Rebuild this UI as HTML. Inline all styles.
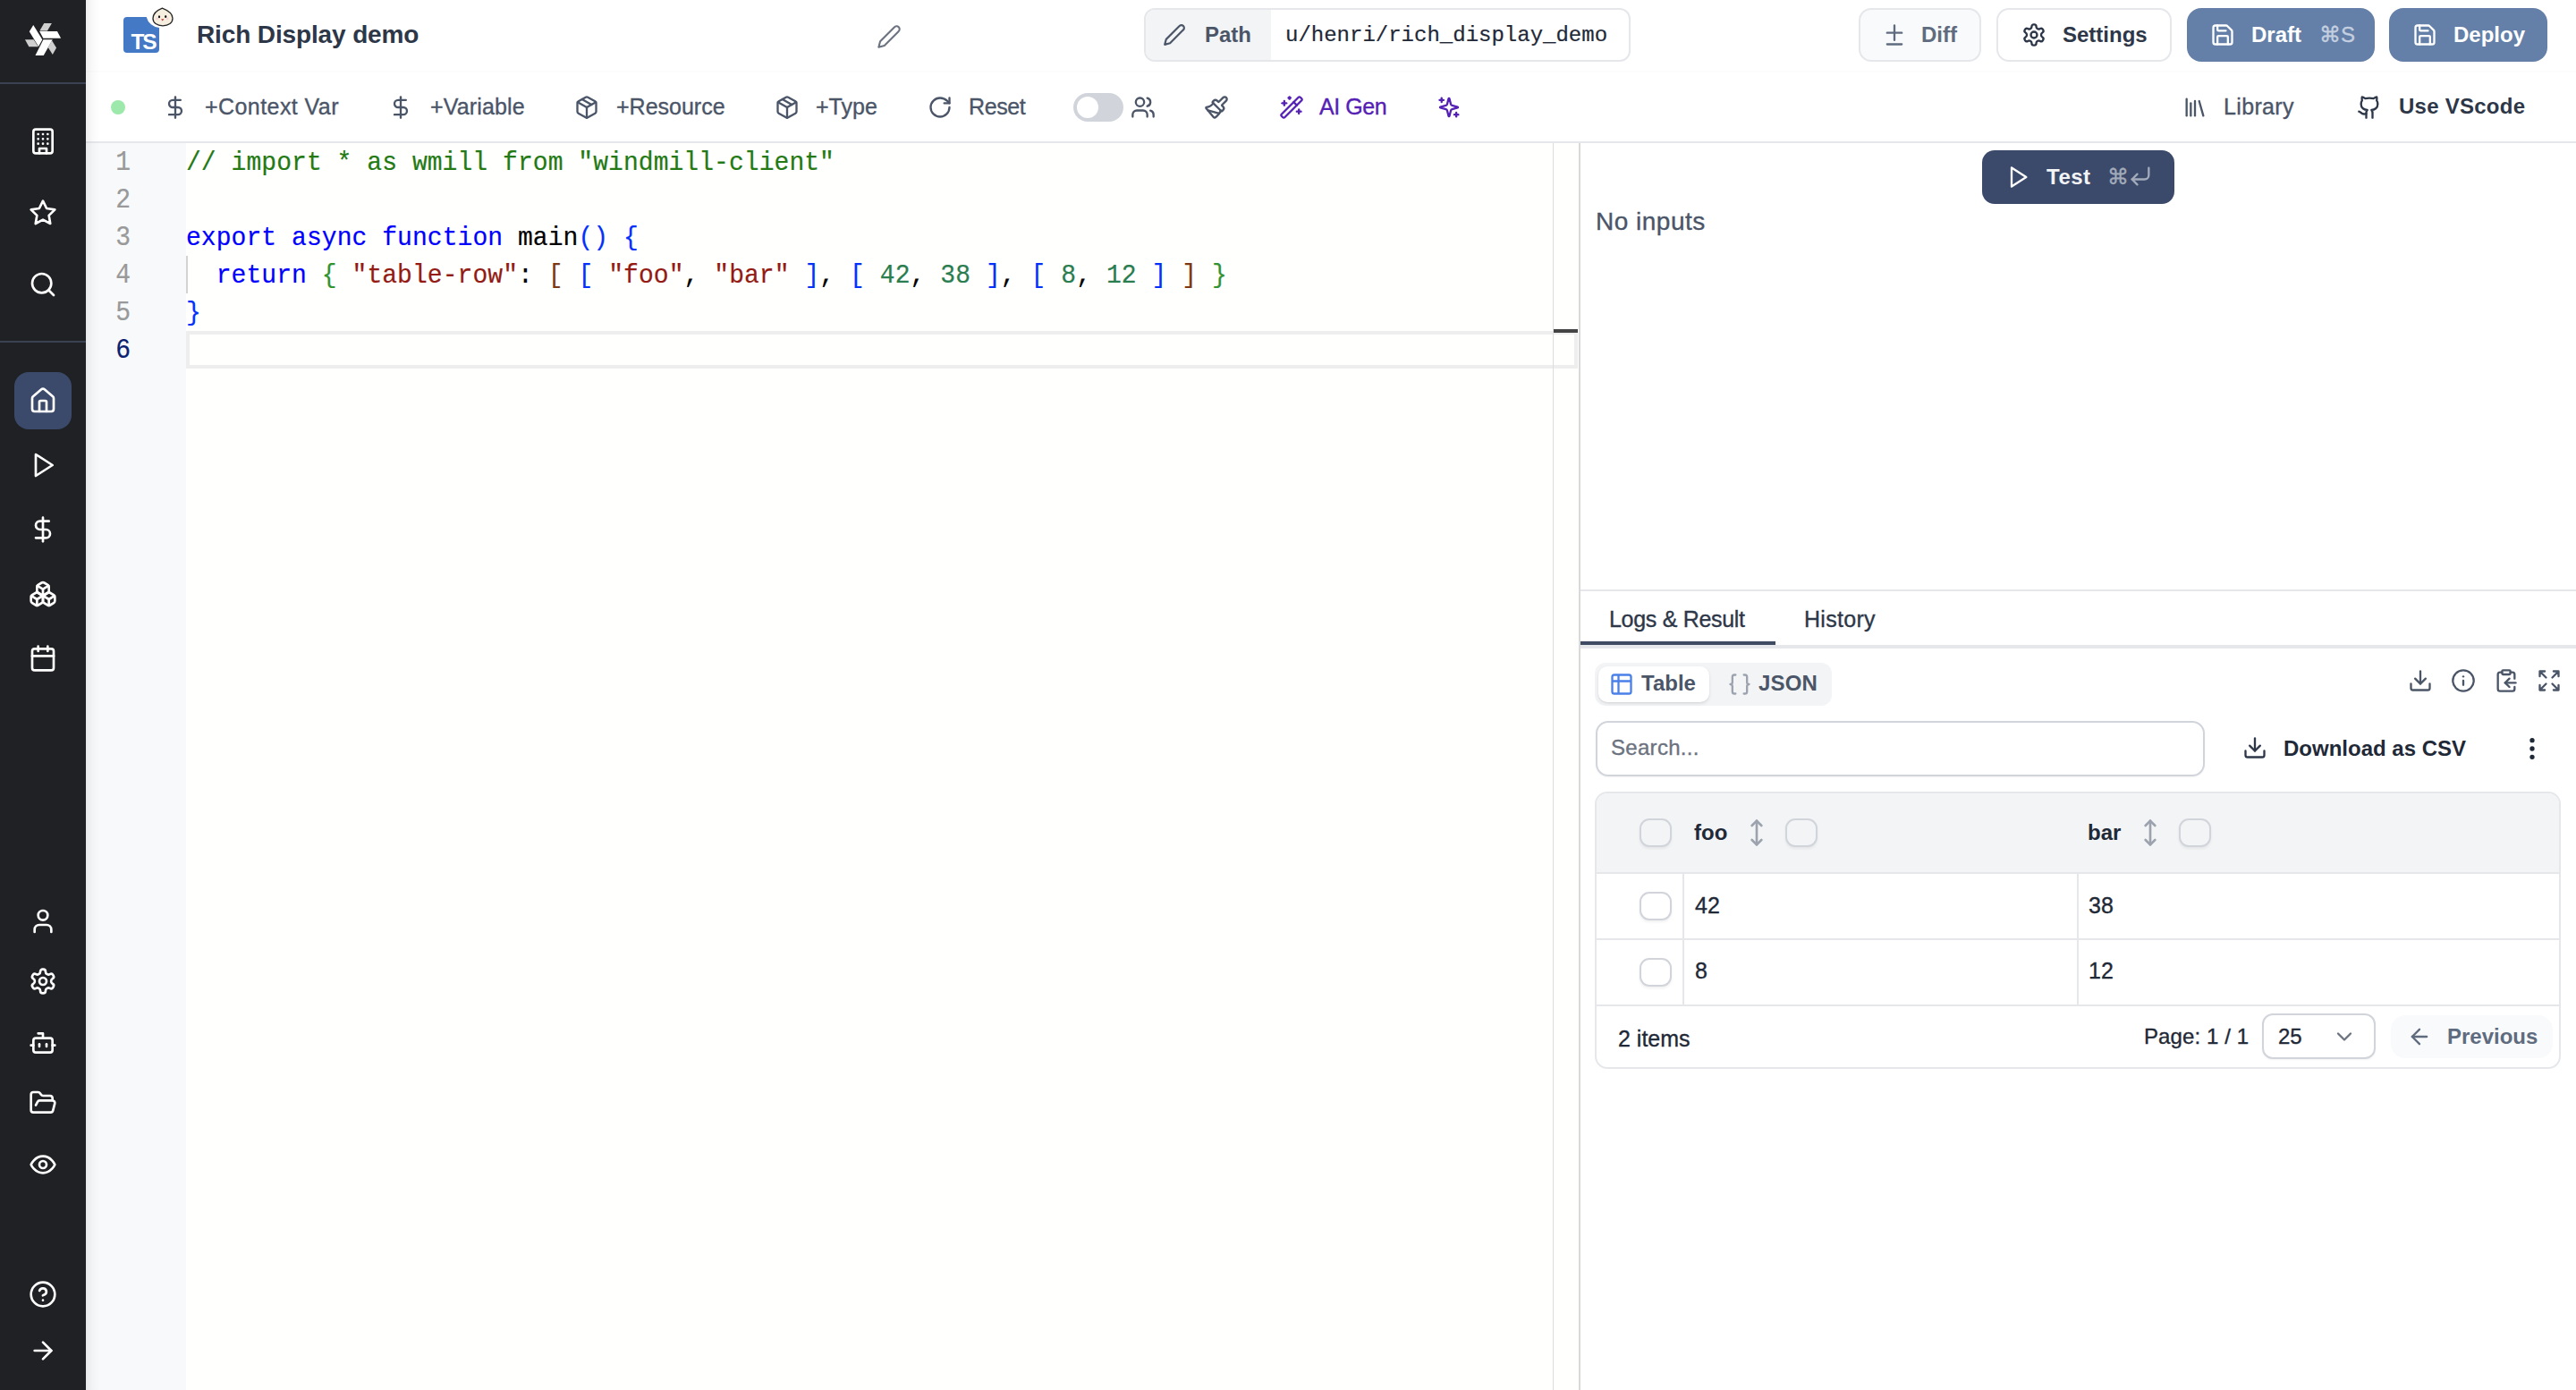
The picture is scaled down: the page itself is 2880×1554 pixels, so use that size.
<!DOCTYPE html>
<html><head><meta charset="utf-8">
<style>
*{box-sizing:border-box;margin:0;padding:0}
html,body{width:2880px;height:1554px;overflow:hidden;background:#fff;font-family:"Liberation Sans",sans-serif}
.a{position:absolute}
.t{position:absolute;white-space:nowrap;line-height:1;-webkit-text-stroke:0.35px currentColor}
.t[style*="font-weight:bold"]{-webkit-text-stroke:0}
.m{-webkit-text-stroke:0.2px currentColor}
.m span{-webkit-text-stroke:0.2px currentColor}
.m{font-family:"Liberation Mono",monospace}
svg.i{position:absolute;fill:none;stroke:currentColor;stroke-width:2;stroke-linecap:round;stroke-linejoin:round}
@media (max-width:2000px){html{zoom:0.5}}
#side{left:0;top:0;width:96px;height:1554px;background:#202125}
#side svg.i{color:#fff}
</style></head><body>

<!-- SIDEBAR -->
<div id="side" class="a">
  <svg class="a" style="left:16px;top:10px" width="64" height="64" viewBox="0 0 1390 1390">
    <g fill="#fff">
      <polygon points="462,390 680,742 588,910 365,548"/>
      <polygon points="612,545 1042,545 1132,712 702,712"/>
      <polygon points="705,745 928,745 712,1127 510,1127"/>
    </g>
    <g fill="#cfcfcf">
      <polygon points="722,350 910,350 802,532 615,532"/>
      <polygon points="260,745 470,745 582,915 355,915"/>
      <polygon points="912,768 1022,945 930,1105 820,935"/>
    </g>
  </svg>
  <div class="a" style="left:0;top:92px;width:96px;height:2px;background:#3a4150"></div>
  <div class="a" style="left:0;top:381px;width:96px;height:2px;background:#3a4150"></div>
  <div class="a" style="left:16px;top:416px;width:64px;height:64px;border-radius:16px;background:#3b4a6b"></div>
  <svg class="i" style="left:32px;top:142px" width="32" height="32" viewBox="0 0 24 24"><rect width="16" height="20" x="4" y="2" rx="2" ry="2"/><path d="M9 22v-4h6v4"/><path d="M8 6h.01M16 6h.01M12 6h.01M12 10h.01M12 14h.01M16 10h.01M16 14h.01M8 10h.01M8 14h.01"/></svg>
  <svg class="i" style="left:32px;top:221.5px" width="32" height="32" viewBox="0 0 24 24"><polygon points="12 2 15.09 8.26 22 9.27 17 14.14 18.18 21.02 12 17.77 5.82 21.02 7 14.14 2 9.27 8.91 8.26 12 2"/></svg>
  <svg class="i" style="left:32px;top:302px" width="32" height="32" viewBox="0 0 24 24"><circle cx="11" cy="11" r="8"/><path d="m21 21-4.3-4.3"/></svg>
  <svg class="i" style="left:32px;top:432px" width="32" height="32" viewBox="0 0 24 24"><path d="M15 21v-8a1 1 0 0 0-1-1h-4a1 1 0 0 0-1 1v8"/><path d="M3 10a2 2 0 0 1 .709-1.528l7-5.999a2 2 0 0 1 2.582 0l7 5.999A2 2 0 0 1 21 10v9a2 2 0 0 1-2 2H5a2 2 0 0 1-2-2z"/></svg>
  <svg class="i" style="left:32px;top:504px" width="32" height="32" viewBox="0 0 24 24"><polygon points="6 3 20 12 6 21 6 3"/></svg>
  <svg class="i" style="left:32px;top:575.5px" width="32" height="32" viewBox="0 0 24 24"><line x1="12" x2="12" y1="2" y2="22"/><path d="M17 5H9.5a3.5 3.5 0 0 0 0 7h5a3.5 3.5 0 0 1 0 7H6"/></svg>
  <svg class="i" style="left:32px;top:648px" width="32" height="32" viewBox="0 0 24 24"><path d="M2.97 12.92A2 2 0 0 0 2 14.63v3.24a2 2 0 0 0 .97 1.71l3 1.8a2 2 0 0 0 2.06 0L12 19v-5.5l-5-3-4.03 2.42Z"/><path d="m7 16.5-4.74-2.85"/><path d="m7 16.5 5-3"/><path d="M7 16.5v5.17"/><path d="M12 13.5V19l3.97 2.38a2 2 0 0 0 2.06 0l3-1.8a2 2 0 0 0 .97-1.71v-3.24a2 2 0 0 0-.97-1.71L17 10.5l-5 3Z"/><path d="m17 16.5-5-3"/><path d="m17 16.5 4.74-2.85"/><path d="M17 16.5v5.17"/><path d="M7.97 4.42A2 2 0 0 0 7 6.13v4.37l5 3 5-3V6.13a2 2 0 0 0-.97-1.71l-3-1.8a2 2 0 0 0-2.06 0l-3 1.8Z"/><path d="M12 8 7.26 5.15"/><path d="m12 8 4.74-2.85"/><path d="M12 13.5V8"/></svg>
  <svg class="i" style="left:32px;top:720px" width="32" height="32" viewBox="0 0 24 24"><path d="M8 2v4"/><path d="M16 2v4"/><rect width="18" height="18" x="3" y="4" rx="2"/><path d="M3 10h18"/></svg>
  <svg class="i" style="left:32px;top:1014px" width="32" height="32" viewBox="0 0 24 24"><path d="M19 21v-2a4 4 0 0 0-4-4H9a4 4 0 0 0-4 4v2"/><circle cx="12" cy="7" r="4"/></svg>
  <svg class="i" style="left:32px;top:1081px" width="32" height="32" viewBox="0 0 24 24"><path d="M12.22 2h-.44a2 2 0 0 0-2 2v.18a2 2 0 0 1-1 1.73l-.43.25a2 2 0 0 1-2 0l-.15-.08a2 2 0 0 0-2.73.73l-.22.38a2 2 0 0 0 .73 2.730l.15.1a2 2 0 0 1 1 1.72v.51a2 2 0 0 1-1 1.74l-.15.09a2 2 0 0 0-.73 2.73l.22.38a2 2 0 0 0 2.73.73l.15-.08a2 2 0 0 1 2 0l.43.25a2 2 0 0 1 1 1.73V20a2 2 0 0 0 2 2h.44a2 2 0 0 0 2-2v-.18a2 2 0 0 1 1-1.73l.43-.25a2 2 0 0 1 2 0l.15.08a2 2 0 0 0 2.73-.73l.22-.39a2 2 0 0 0-.73-2.73l-.15-.08a2 2 0 0 1-1-1.740v-.5a2 2 0 0 1 1-1.74l.15-.09a2 2 0 0 0 .73-2.73l-.22-.38a2 2 0 0 0-2.73-.73l-.15.08a2 2 0 0 1-2 0l-.43-.25a2 2 0 0 1-1-1.73V4a2 2 0 0 0-2-2z"/><circle cx="12" cy="12" r="3"/></svg>
  <svg class="i" style="left:32px;top:1150px" width="32" height="32" viewBox="0 0 24 24"><path d="M12 8V4H8"/><rect width="16" height="12" x="4" y="8" rx="2"/><path d="M2 14h2"/><path d="M20 14h2"/><path d="M15 13v2"/><path d="M9 13v2"/></svg>
  <svg class="i" style="left:32px;top:1217px" width="32" height="32" viewBox="0 0 24 24"><path d="m6 14 1.5-2.9A2 2 0 0 1 9.24 10H20a2 2 0 0 1 1.94 2.5l-1.54 6a2 2 0 0 1-1.950 1.5H4a2 2 0 0 1-2-2V5a2 2 0 0 1 2-2h3.9a2 2 0 0 1 1.69.9l.81 1.2a2 2 0 0 0 1.67.9H18a2 2 0 0 1 2 2v2"/></svg>
  <svg class="i" style="left:32px;top:1286px" width="32" height="32" viewBox="0 0 24 24"><path d="M2 12s3-7 10-7 10 7 10 7-3 7-10 7-10-7-10-7Z"/><circle cx="12" cy="12" r="3"/></svg>
  <svg class="i" style="left:32px;top:1431px" width="32" height="32" viewBox="0 0 24 24"><circle cx="12" cy="12" r="10"/><path d="M9.09 9a3 3 0 0 1 5.83 1c0 2-3 3-3 3"/><path d="M12 17h.01"/></svg>
  <svg class="i" style="left:32px;top:1494px" width="32" height="32" viewBox="0 0 24 24"><path d="M5 12h14"/><path d="m12 5 7 7-7 7"/></svg>
</div>

<!-- main shadow -->
<div class="a" style="left:96px;top:0;width:16px;height:1554px;background:linear-gradient(90deg,rgba(0,0,0,0.065),rgba(0,0,0,0.02) 50%,rgba(0,0,0,0));z-index:5;pointer-events:none"></div>

<!-- HEADER -->
<div class="a" style="left:96px;top:0;width:2784px;height:81px;background:#fff;border-bottom:2px solid #fcfcfc"></div>
<!-- TS icon -->
<svg class="a" style="left:136px;top:8px" width="60" height="54" viewBox="0 0 60 54">
  <path d="M6 11 H27.7 A16 16 0 0 0 42 23 V47 A4 4 0 0 1 38 51 H6 A4 4 0 0 1 2 47 V15 A4 4 0 0 1 6 11 Z" fill="#4479c5"/>
  <text x="10.5" y="47.3" font-family="Liberation Sans" font-weight="bold" font-size="24.5" fill="#fff" letter-spacing="-2.2">TS</text>
  <path d="M45.4 1.2 C41 3 35 6.5 35 12.5 C35 17.5 39.5 20.8 46 20.8 C52.5 20.8 57 17.5 57 12.5 C57 6.5 50 3 45.4 1.2Z" fill="#f6eedf" stroke="#262626" stroke-width="1.3"/>
  <ellipse cx="42" cy="10.7" rx="1.1" ry="1.5" fill="#111"/><ellipse cx="49.2" cy="10.4" rx="1.1" ry="1.5" fill="#111"/>
  <circle cx="39.6" cy="12.9" r="1.3" fill="#f7cfd8"/><circle cx="51.2" cy="12.8" r="1.3" fill="#f7cfd8"/>
  <path d="M44.1 13.3 L47.5 13.3 L45.7 15.6Z" fill="#c23b3b"/>
</svg>
<div class="t" style="left:220px;top:25px;font-size:28px;font-weight:bold;color:#2d3748;letter-spacing:-0.13px">Rich Display demo</div>
<svg class="i" style="left:980px;top:27px;color:#6b7280;stroke-width:1.8" width="28" height="28" viewBox="0 0 24 24"><path d="M17 3a2.85 2.83 0 1 1 4 4L7.5 20.5 2 22l1.5-5.5Z"/></svg>

<!-- Path box -->
<div class="a" style="left:1279px;top:9px;width:544px;height:60px;border:2px solid #e5e7eb;border-radius:12px;background:#fff;overflow:hidden">
  <div class="a" style="left:0;top:0;width:140px;height:56px;background:#f3f4f6"></div>
</div>
<svg class="i" style="left:1300px;top:26px;color:#4b5568" width="26" height="26" viewBox="0 0 24 24"><path d="M17 3a2.85 2.83 0 1 1 4 4L7.5 20.5 2 22l1.5-5.5Z"/></svg>
<div class="t" style="left:1347px;top:27px;font-size:24px;font-weight:bold;color:#4b5568">Path</div>
<div class="t m" style="left:1437px;top:28px;font-size:24px;color:#1f2937">u/henri/rich_display_demo</div>

<!-- Diff -->
<div class="a" style="left:2078px;top:9px;width:137px;height:60px;border:2px solid #e5e7eb;border-radius:14px;background:#f9fafb"></div>
<svg class="i" style="left:2104px;top:25px;color:#5f6b7e" width="28" height="28" viewBox="0 0 24 24"><path d="M12 3v14"/><path d="M5 10h14"/><path d="M5 21h14"/></svg>
<div class="t" style="left:2148px;top:27px;font-size:24px;font-weight:bold;color:#5f6b7e">Diff</div>
<!-- Settings -->
<div class="a" style="left:2232px;top:9px;width:196px;height:60px;border:2px solid #e5e7eb;border-radius:14px;background:#fff"></div>
<svg class="i" style="left:2260px;top:25px;color:#2d3748" width="28" height="28" viewBox="0 0 24 24"><path d="M12.22 2h-.44a2 2 0 0 0-2 2v.18a2 2 0 0 1-1 1.73l-.43.25a2 2 0 0 1-2 0l-.15-.08a2 2 0 0 0-2.73.73l-.22.38a2 2 0 0 0 .73 2.73l.15.1a2 2 0 0 1 1 1.72v.51a2 2 0 0 1-1 1.74l-.15.09a2 2 0 0 0-.73 2.73l.22.38a2 2 0 0 0 2.73.73l.15-.08a2 2 0 0 1 2 0l.43.25a2 2 0 0 1 1 1.73V20a2 2 0 0 0 2 2h.44a2 2 0 0 0 2-2v-.18a2 2 0 0 1 1-1.73l.43-.25a2 2 0 0 1 2 0l.15.08a2 2 0 0 0 2.73-.73l.22-.39a2 2 0 0 0-.73-2.73l-.15-.08a2 2 0 0 1-1-1.74v-.5a2 2 0 0 1 1-1.74l.15-.09a2 2 0 0 0 .73-2.73l-.22-.38a2 2 0 0 0-2.73-.73l-.15.08a2 2 0 0 1-2 0l-.43-.25a2 2 0 0 1-1-1.73V4a2 2 0 0 0-2-2z"/><circle cx="12" cy="12" r="3"/></svg>
<div class="t" style="left:2306px;top:27px;font-size:24px;font-weight:bold;color:#2d3748">Settings</div>
<!-- Draft -->
<div class="a" style="left:2445px;top:9px;width:210px;height:60px;border-radius:16px;background:#6480a8"></div>
<svg class="i" style="left:2471px;top:25px;color:#fff" width="28" height="28" viewBox="0 0 24 24"><path d="M15.2 3a2 2 0 0 1 1.4.6l3.8 3.8a2 2 0 0 1 .6 1.4V19a2 2 0 0 1-2 2H5a2 2 0 0 1-2-2V5a2 2 0 0 1 2-2z"/><path d="M17 21v-7a1 1 0 0 0-1-1H8a1 1 0 0 0-1 1v7"/><path d="M7 3v4a1 1 0 0 0 1 1h7"/></svg>
<div class="t" style="left:2517px;top:27px;font-size:24px;font-weight:bold;color:#fff">Draft</div>
<div class="t" style="left:2593px;top:27px;font-size:24px;color:#c4cfe0">⌘S</div>
<!-- Deploy -->
<div class="a" style="left:2671px;top:9px;width:177px;height:60px;border-radius:16px;background:#6480a8"></div>
<svg class="i" style="left:2697px;top:25px;color:#fff" width="28" height="28" viewBox="0 0 24 24"><path d="M15.2 3a2 2 0 0 1 1.4.6l3.8 3.8a2 2 0 0 1 .6 1.4V19a2 2 0 0 1-2 2H5a2 2 0 0 1-2-2V5a2 2 0 0 1 2-2z"/><path d="M17 21v-7a1 1 0 0 0-1-1H8a1 1 0 0 0-1 1v7"/><path d="M7 3v4a1 1 0 0 0 1 1h7"/></svg>
<div class="t" style="left:2743px;top:27px;font-size:24px;font-weight:bold;color:#fff">Deploy</div>

<!-- TOOLBAR -->
<div class="a" style="left:96px;top:158px;width:2784px;height:2px;background:#e5e7eb"></div>
<div class="a" style="left:124px;top:112px;width:16px;height:16px;border-radius:8px;background:#9de8ab"></div>
<svg class="i" style="left:182px;top:106px;color:#4b5568" width="28" height="28" viewBox="0 0 24 24"><line x1="12" x2="12" y1="2" y2="22"/><path d="M17 5H9.5a3.5 3.5 0 0 0 0 7h5a3.5 3.5 0 0 1 0 7H6"/></svg>
<div class="t" style="left:229px;top:106.8px;font-size:25px;color:#4b5568;letter-spacing:0.43px">+Context Var</div>
<svg class="i" style="left:434px;top:106px;color:#4b5568" width="28" height="28" viewBox="0 0 24 24"><line x1="12" x2="12" y1="2" y2="22"/><path d="M17 5H9.5a3.5 3.5 0 0 0 0 7h5a3.5 3.5 0 0 1 0 7H6"/></svg>
<div class="t" style="left:481px;top:106.8px;font-size:25px;color:#4b5568;letter-spacing:0.15px">+Variable</div>
<svg class="i" style="left:642px;top:106px;color:#4b5568" width="28" height="28" viewBox="0 0 24 24"><path d="m7.5 4.27 9 5.15"/><path d="M21 8a2 2 0 0 0-1-1.73l-7-4a2 2 0 0 0-2 0l-7 4A2 2 0 0 0 3 8v8a2 2 0 0 0 1 1.73l7 4a2 2 0 0 0 2 0l7-4A2 2 0 0 0 21 16Z"/><path d="m3.3 7 8.7 5 8.7-5"/><path d="M12 22V12"/></svg>
<div class="t" style="left:689px;top:106.8px;font-size:25px;color:#4b5568;letter-spacing:0px">+Resource</div>
<svg class="i" style="left:866px;top:106px;color:#4b5568" width="28" height="28" viewBox="0 0 24 24"><path d="m7.5 4.27 9 5.15"/><path d="M21 8a2 2 0 0 0-1-1.73l-7-4a2 2 0 0 0-2 0l-7 4A2 2 0 0 0 3 8v8a2 2 0 0 0 1 1.73l7 4a2 2 0 0 0 2 0l7-4A2 2 0 0 0 21 16Z"/><path d="m3.3 7 8.7 5 8.7-5"/><path d="M12 22V12"/></svg>
<div class="t" style="left:912px;top:106.8px;font-size:25px;color:#4b5568;letter-spacing:0px">+Type</div>
<svg class="i" style="left:1037px;top:106px;color:#4b5568" width="28" height="28" viewBox="0 0 24 24"><path d="M21 12a9 9 0 1 1-9-9c2.52 0 4.93 1 6.74 2.74L21 8"/><path d="M21 3v5h-5"/></svg>
<div class="t" style="left:1083px;top:106.8px;font-size:25px;color:#4b5568;letter-spacing:-0.4px">Reset</div>
<div class="a" style="left:1200px;top:104px;width:56px;height:32px;border-radius:16px;background:#d1d5db"></div>
<div class="a" style="left:1204px;top:108px;width:24px;height:24px;border-radius:12px;background:#fff"></div>
<svg class="i" style="left:1264px;top:106px;color:#4b5568" width="28" height="28" viewBox="0 0 24 24"><path d="M16 21v-2a4 4 0 0 0-4-4H6a4 4 0 0 0-4 4v2"/><circle cx="9" cy="7" r="4"/><path d="M22 21v-2a4 4 0 0 0-3-3.87"/><path d="M16 3.13a4 4 0 0 1 0 7.75"/></svg>
<svg class="i" style="left:1346px;top:106px;color:#4b5568" width="28" height="28" viewBox="0 0 24 24"><path d="m14.622 17.897-10.68-2.913"/><path d="M18.376 2.622a1 1 0 1 1 3.002 3.002L17.36 9.643a.5.5 0 0 0 0 .707l.944.944a2.41 2.41 0 0 1 0 3.408l-.944.944a.5.5 0 0 1-.707 0L8.354 7.348a.5.5 0 0 1 0-.707l.944-.944a2.41 2.41 0 0 1 3.408 0l.944.944a.5.5 0 0 0 .707 0z"/><path d="M9 8c-1.804 2.71-3.97 3.46-6.583 3.948a.507.507 0 0 0-.302.819l7.32 8.883a1 1 0 0 0 1.185.204C12.735 20.405 16 16.792 16 15"/></svg>
<svg class="i" style="left:1429.6px;top:106px;color:#5521b5" width="28" height="28" viewBox="0 0 24 24"><path d="m21.64 3.64-1.28-1.28a1.21 1.21 0 0 0-1.72 0L2.36 18.64a1.21 1.21 0 0 0 0 1.72l1.28 1.28a1.2 1.2 0 0 0 1.72 0L21.64 5.36a1.2 1.2 0 0 0 0-1.72"/><path d="m14 7 3 3"/><path d="M5 6v4"/><path d="M19 14v4"/><path d="M10 2v2"/><path d="M7 8H3"/><path d="M21 16h-4"/><path d="M11 3H9"/></svg>
<div class="t" style="left:1475px;top:106.8px;font-size:25px;color:#5521b5;letter-spacing:-0.45px">AI Gen</div>
<svg class="i" style="left:1606px;top:106px;color:#5521b5" width="28" height="28" viewBox="0 0 24 24"><g transform="translate(12 12) scale(0.86) translate(-12 -12)" stroke-width="2.3"><path d="M9.937 15.5A2 2 0 0 0 8.5 14.063l-6.135-1.582a.5.5 0 0 1 0-.962L8.5 9.936A2 2 0 0 0 9.937 8.5l1.582-6.135a.5.5 0 0 1 .963 0L14.063 8.5A2 2 0 0 0 15.5 9.937l6.135 1.581a.5.5 0 0 1 0 .964L15.5 14.063a2 2 0 0 0-1.437 1.437l-1.582 6.135a.5.5 0 0 1-.963 0z"/></g><path d="M4.9 3.1v3.8M3 5h3.8M19 17.1v3.8M17.1 19h3.8"/></svg>
<svg class="i" style="left:2440px;top:106px;color:#4b5568" width="28" height="28" viewBox="0 0 24 24"><path d="m16 6 4 14"/><path d="M12 6v14"/><path d="M8 8v12"/><path d="M4 4v16"/></svg>
<div class="t" style="left:2486px;top:106.8px;font-size:25px;color:#4b5568;letter-spacing:0.35px">Library</div>
<svg class="i" style="left:2634.5px;top:106px;color:#2d3748" width="28" height="28" viewBox="0 0 24 24"><path d="M15 22v-4a4.8 4.8 0 0 0-1-3.5c3 0 6-2 6-5.5.08-1.25-.27-2.48-1-3.5.28-1.15.28-2.35 0-3.5 0 0-1 0-3 1.5-2.64-.5-5.36-.5-8 0C6 2 5 2 5 2c-.3 1.15-.3 2.35 0 3.5A5.403 5.403 0 0 0 4 9c0 3.5 3 5.5 6 5.5-.39.49-.68 1.05-.85 1.65-.17.6-.22 1.23-.15 1.85v4"/><path d="M9 18c-4.51 2-5-2-7-2"/></svg>
<div class="t" style="left:2682px;top:107.3px;font-size:24px;font-weight:bold;color:#2d3748;letter-spacing:0.25px">Use VScode</div>

<!-- EDITOR -->
<div class="a" style="left:96px;top:160px;width:1669px;height:1394px;background:#fffffe"></div>
<div class="a" style="left:96px;top:160px;width:112px;height:1394px;background:#f8f9fb"></div>
<div class="a" style="left:208px;top:370px;width:1556px;height:42px;border:4px solid #eeeeee;border-left:none"></div>
<div class="a" style="left:208px;top:370px;width:4px;height:42px;background:#eeeeee"></div>
<div class="a" style="left:208px;top:286px;width:2px;height:42px;background:#d3d3d3"></div>
<div class="a" style="left:1736px;top:160px;width:1px;height:1394px;background:#dddddd"></div>
<div class="a" style="left:1737px;top:368px;width:27px;height:4px;background:#444"></div>
<div class="a" style="left:1765px;top:160px;width:2px;height:1394px;background:#d9d9d9"></div>
<div class="t m" style="left:96px;width:50px;text-align:right;transform:scaleY(1.14);transform-origin:0 28.5px;top:161.5px;line-height:42px;font-size:28px;color:#999999">1</div>
<div class="t m" style="left:96px;width:50px;text-align:right;transform:scaleY(1.14);transform-origin:0 28.5px;top:203.5px;line-height:42px;font-size:28px;color:#999999">2</div>
<div class="t m" style="left:96px;width:50px;text-align:right;transform:scaleY(1.14);transform-origin:0 28.5px;top:245.5px;line-height:42px;font-size:28px;color:#999999">3</div>
<div class="t m" style="left:96px;width:50px;text-align:right;transform:scaleY(1.14);transform-origin:0 28.5px;top:287.5px;line-height:42px;font-size:28px;color:#999999">4</div>
<div class="t m" style="left:96px;width:50px;text-align:right;transform:scaleY(1.14);transform-origin:0 28.5px;top:329.5px;line-height:42px;font-size:28px;color:#999999">5</div>
<div class="t m" style="left:96px;width:50px;text-align:right;transform:scaleY(1.14);transform-origin:0 28.5px;top:371.5px;line-height:42px;font-size:28px;color:#0b216f">6</div>
<div class="t m" style="left:208px;top:161.5px;line-height:42px;font-size:28px;white-space:pre;letter-spacing:0.057px;transform:scaleY(1.04);transform-origin:0 28.5px"><span style="color:#237a14">// import * as wmill from &quot;windmill-client&quot;</span></div>
<div class="t m" style="left:208px;top:245.5px;line-height:42px;font-size:28px;white-space:pre;letter-spacing:0.057px;transform:scaleY(1.04);transform-origin:0 28.5px"><span style="color:#0000ff">export</span><span style="color:#000000"> </span><span style="color:#0000ff">async</span><span style="color:#000000"> </span><span style="color:#0000ff">function</span><span style="color:#000000"> main</span><span style="color:#0431fa">()</span><span style="color:#000000"> </span><span style="color:#0431fa">{</span></div>
<div class="t m" style="left:208px;top:287.5px;line-height:42px;font-size:28px;white-space:pre;letter-spacing:0.057px;transform:scaleY(1.04);transform-origin:0 28.5px"><span style="color:#000000">  </span><span style="color:#0000ff">return</span><span style="color:#000000"> </span><span style="color:#319331">{</span><span style="color:#000000"> </span><span style="color:#931b14">&quot;table-row&quot;</span><span style="color:#000000">: </span><span style="color:#7b3814">[</span><span style="color:#000000"> </span><span style="color:#0431fa">[</span><span style="color:#000000"> </span><span style="color:#931b14">&quot;foo&quot;</span><span style="color:#000000">, </span><span style="color:#931b14">&quot;bar&quot;</span><span style="color:#000000"> </span><span style="color:#0431fa">]</span><span style="color:#000000">, </span><span style="color:#0431fa">[</span><span style="color:#000000"> </span><span style="color:#2a7d4f">42</span><span style="color:#000000">, </span><span style="color:#2a7d4f">38</span><span style="color:#000000"> </span><span style="color:#0431fa">]</span><span style="color:#000000">, </span><span style="color:#0431fa">[</span><span style="color:#000000"> </span><span style="color:#2a7d4f">8</span><span style="color:#000000">, </span><span style="color:#2a7d4f">12</span><span style="color:#000000"> </span><span style="color:#0431fa">]</span><span style="color:#000000"> </span><span style="color:#7b3814">]</span><span style="color:#000000"> </span><span style="color:#319331">}</span></div>
<div class="t m" style="left:208px;top:329.5px;line-height:42px;font-size:28px;white-space:pre;letter-spacing:0.057px;transform:scaleY(1.04);transform-origin:0 28.5px"><span style="color:#0431fa">}</span></div>

<!-- RIGHT PANEL -->
<div class="a" style="left:2216px;top:168px;width:215px;height:60px;border-radius:14px;background:#3b4a6b"></div>
<svg class="i" style="left:2242px;top:183.6px;color:#fff" width="28" height="28" viewBox="0 0 24 24"><polygon points="6 3 20 12 6 21 6 3"/></svg>
<div class="t" style="left:2288px;top:185.7px;font-size:24px;font-weight:bold;color:#f3f4f6;letter-spacing:0.5px">Test</div>
<div class="t" style="left:2356px;top:186px;font-size:24px;color:#a3abba">⌘</div>
<svg class="i" style="left:2379px;top:183px;color:#a3abba" width="28" height="28" viewBox="0 0 24 24"><polyline points="9 10 4 15 9 20"/><path d="M20 4v7a4 4 0 0 1-4 4H4"/></svg>
<div class="t" style="left:1784px;top:234.2px;font-size:28px;color:#4b5568;letter-spacing:0.5px">No inputs</div>

<div class="a" style="left:1767px;top:659px;width:1113px;height:2px;background:#e5e7eb"></div>
<div class="a" style="left:1767px;top:721px;width:1113px;height:4px;background:#e5e7eb"></div>
<div class="a" style="left:1767px;top:717px;width:218px;height:4px;background:#3f4b63"></div>
<div class="t" style="left:1799px;top:679.8px;font-size:25px;color:#2d3748;letter-spacing:-0.3px">Logs &amp; Result</div>
<div class="t" style="left:2017px;top:679.8px;font-size:25px;color:#2d3748;letter-spacing:0.3px">History</div>
<div class="a" style="left:1783px;top:741px;width:265px;height:48px;border-radius:12px;background:#f3f4f6"></div>
<div class="a" style="left:1787px;top:745px;width:124px;height:40px;border-radius:10px;background:#fff;box-shadow:0 2px 4px rgba(0,0,0,0.08),0 1px 2px rgba(0,0,0,0.06)"></div>
<svg class="i" style="left:1799px;top:751px;color:#4a80e8" width="28" height="28" viewBox="0 0 24 24"><path d="M9 3H5a2 2 0 0 0-2 2v4m6-6h10a2 2 0 0 1 2 2v4M9 3v18m0 0h10a2 2 0 0 0 2-2V9M9 21H5a2 2 0 0 1-2-2V9m0 0h18"/></svg>
<div class="t" style="left:1835px;top:752.3px;font-size:24px;font-weight:bold;color:#4b5568;letter-spacing:0px">Table</div>
<svg class="i" style="left:1931px;top:751px;color:#9ca3af" width="28" height="28" viewBox="0 0 24 24"><path d="M8 3H7a2 2 0 0 0-2 2v5a2 2 0 0 1-2 2 2 2 0 0 1 2 2v5c0 1.1.9 2 2 2h1"/><path d="M16 21h1a2 2 0 0 0 2-2v-5c0-1.1.9-2 2-2a2 2 0 0 1-2-2V5a2 2 0 0 0-2-2h-1"/></svg>
<div class="t" style="left:1966px;top:752.3px;font-size:24px;font-weight:bold;color:#4b5568;letter-spacing:0.2px">JSON</div>
<svg class="i" style="left:2692px;top:747px;color:#4b5568" width="28" height="28" viewBox="0 0 24 24"><path d="M21 15v4a2 2 0 0 1-2 2H5a2 2 0 0 1-2-2v-4"/><polyline points="7 10 12 15 17 10"/><line x1="12" x2="12" y1="15" y2="3"/></svg>
<svg class="i" style="left:2740px;top:747px;color:#4b5568" width="28" height="28" viewBox="0 0 24 24"><circle cx="12" cy="12" r="10"/><path d="M12 16v-4"/><path d="M12 8h.01"/></svg>
<svg class="i" style="left:2787.92px;top:747px;color:#4b5568" width="28" height="28" viewBox="0 0 24 24"><rect width="8" height="4" x="8" y="2" rx="1" ry="1"/><path d="M8 4H6a2 2 0 0 0-2 2v14a2 2 0 0 0 2 2h12a2 2 0 0 0 2-2v-2"/><path d="M16 4h2a2 2 0 0 1 2 2v4"/><path d="M21 14H11"/><path d="m15 10-4 4 4 4"/></svg>
<svg class="i" style="left:2836px;top:747px;color:#4b5568" width="28" height="28" viewBox="0 0 24 24"><path d="m21 21-6-6m6 6v-4.8m0 4.8h-4.8"/><path d="M3 16.2V21m0 0h4.8M3 21l6-6"/><path d="M21 7.8V3m0 0h-4.8M21 3l-6 6"/><path d="M3 7.8V3m0 0h4.8M3 3l6 6"/></svg>
<div class="a" style="left:1784px;top:806px;width:681px;height:62px;border-radius:14px;border:2px solid #d1d5db;background:#fff;box-shadow:0 1px 2px rgba(0,0,0,0.05)"></div>
<div class="t" style="left:1801px;top:824.0px;font-size:24px;font-weight:normal;color:#6b7280;letter-spacing:0.3px">Search...</div>
<svg class="i" style="left:2507px;top:822px;color:#2d3748" width="28" height="28" viewBox="0 0 24 24"><path d="M21 15v4a2 2 0 0 1-2 2H5a2 2 0 0 1-2-2v-4"/><polyline points="7 10 12 15 17 10"/><line x1="12" x2="12" y1="15" y2="3"/></svg>
<div class="t" style="left:2553px;top:824.5px;font-size:24px;font-weight:bold;color:#1f2937;letter-spacing:0px">Download as CSV</div>
<svg class="i" style="left:2815px;top:820.8px;color:#1f2937" width="32" height="32" viewBox="0 0 24 24"><circle cx="12" cy="12" r="1"/><circle cx="12" cy="5" r="1"/><circle cx="12" cy="19" r="1"/></svg>
<div class="a" style="left:1783px;top:885px;width:1080px;height:310px;border-radius:14px;border:2px solid #e5e7eb;background:#fff;overflow:hidden"><div class="a" style="left:0;top:0;width:1076px;height:90px;background:#f3f4f6;border-bottom:2px solid #e5e7eb"></div><div class="a" style="left:0;top:162px;width:1076px;height:2px;background:#e5e7eb"></div><div class="a" style="left:0;top:236px;width:1076px;height:2px;background:#e5e7eb"></div><div class="a" style="left:96px;top:90px;width:2px;height:146px;background:#e5e7eb"></div><div class="a" style="left:537px;top:90px;width:2px;height:146px;background:#e5e7eb"></div></div>
<div class="a" style="left:1833px;top:915px;width:36px;height:32px;border-radius:11px;border:2px solid #d1d5db;background:#f3f4f6;box-shadow:0 2px 3px rgba(0,0,0,0.06)"></div>
<div class="t" style="left:1894px;top:918.5px;font-size:24px;font-weight:bold;color:#1f2937;letter-spacing:0px">foo</div>
<svg class="i" style="left:1948px;top:915px;color:#9ca3af" width="32" height="32" viewBox="0 0 24 24"><path d="M12 2v20"/><path d="m8 18 4 4 4-4"/><path d="m8 6 4-4 4 4"/></svg>
<div class="a" style="left:1996px;top:915px;width:36px;height:32px;border-radius:11px;border:2px solid #d1d5db;background:#f3f4f6;box-shadow:0 2px 3px rgba(0,0,0,0.06)"></div>
<div class="t" style="left:2334px;top:918.5px;font-size:24px;font-weight:bold;color:#1f2937;letter-spacing:0px">bar</div>
<svg class="i" style="left:2388px;top:915px;color:#9ca3af" width="32" height="32" viewBox="0 0 24 24"><path d="M12 2v20"/><path d="m8 18 4 4 4-4"/><path d="m8 6 4-4 4 4"/></svg>
<div class="a" style="left:2436px;top:915px;width:36px;height:32px;border-radius:11px;border:2px solid #d1d5db;background:#f3f4f6;box-shadow:0 2px 3px rgba(0,0,0,0.06)"></div>
<div class="a" style="left:1833px;top:997px;width:36px;height:32px;border-radius:11px;border:2px solid #d1d5db;background:#fff;box-shadow:0 2px 3px rgba(0,0,0,0.06)"></div>
<div class="t" style="left:1895px;top:999.8px;font-size:25px;font-weight:normal;color:#1f2937;letter-spacing:0px">42</div>
<div class="t" style="left:2335px;top:999.8px;font-size:25px;font-weight:normal;color:#1f2937;letter-spacing:0px">38</div>
<div class="a" style="left:1833px;top:1071px;width:36px;height:32px;border-radius:11px;border:2px solid #d1d5db;background:#fff;box-shadow:0 2px 3px rgba(0,0,0,0.06)"></div>
<div class="t" style="left:1895px;top:1073.4px;font-size:25px;font-weight:normal;color:#1f2937;letter-spacing:0px">8</div>
<div class="t" style="left:2335px;top:1073.4px;font-size:25px;font-weight:normal;color:#1f2937;letter-spacing:0px">12</div>
<div class="t" style="left:1809px;top:1148.5px;font-size:25px;font-weight:normal;color:#1f2937;letter-spacing:0px">2 items</div>
<div class="t" style="left:2397px;top:1146.9px;font-size:24px;font-weight:normal;color:#1f2937;letter-spacing:0.1px">Page: 1 / 1</div>
<div class="a" style="left:2529px;top:1133px;width:127px;height:51px;border-radius:12px;border:2px solid #d1d5db;background:#fff;box-shadow:0 1px 2px rgba(0,0,0,0.05)"></div>
<div class="t" style="left:2547px;top:1146.6px;font-size:24px;font-weight:normal;color:#1f2937;letter-spacing:0px">25</div>
<svg class="i" style="left:2607px;top:1145px;color:#6b7280" width="28" height="28" viewBox="0 0 24 24"><path d="m6 9 6 6 6-6"/></svg>
<div class="a" style="left:2673px;top:1135px;width:181px;height:48px;border-radius:16px;background:#f9fafb"></div>
<svg class="i" style="left:2691px;top:1145.2px;color:#5f6b7e" width="28" height="28" viewBox="0 0 24 24"><path d="m12 19-7-7 7-7"/><path d="M19 12H5"/></svg>
<div class="t" style="left:2736px;top:1146.6px;font-size:24px;font-weight:bold;color:#5f6b7e;letter-spacing:0px">Previous</div>

</body></html>
